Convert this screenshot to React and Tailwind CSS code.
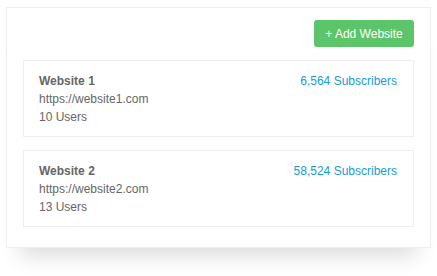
import React from 'react';

const websites = [
  { name: 'Website 1', url: 'https://website1.com', users: 10, subscribers: '6,564' },
  { name: 'Website 2', url: 'https://website2.com', users: 13, subscribers: '58,524' },
];

const WebsiteCard = ({ site }) => (
  <div className="flex justify-between items-start border border-[#eeeeee] bg-white pl-[15px] pr-[16px] pt-[11px] pb-[10px]">
    <div className="flex flex-col text-[12px] leading-[18px] text-[#666666]">
      <span className="font-bold">{site.name}</span>
      <span>{site.url}</span>
      <span>{site.users} Users</span>
    </div>
    <span className="text-[12px] leading-[18px] text-[#1a9bd7]">{site.subscribers} Subscribers</span>
  </div>
);

export default function App() {
  return (
    <div className="w-[437px] h-[276px] bg-white pt-[7px] px-[6px] font-['Liberation_Sans',Arial,sans-serif]">
      <div className="border border-[#eeeeee] bg-white pt-[12px] pb-[20px] px-[16px] shadow-[0_22px_20px_-14px_rgba(0,0,0,0.14)]">
        <div className="flex justify-end">
          <button className="h-[27px] w-[100px] rounded-[3px] bg-[#5cc469] text-white text-[12px]">
            + Add Website
          </button>
        </div>
        <div className="mt-[13px] flex flex-col gap-[13px]">
          {websites.map(site => (
            <WebsiteCard key={site.name} site={site} />
          ))}
        </div>
      </div>
    </div>
  );
}
